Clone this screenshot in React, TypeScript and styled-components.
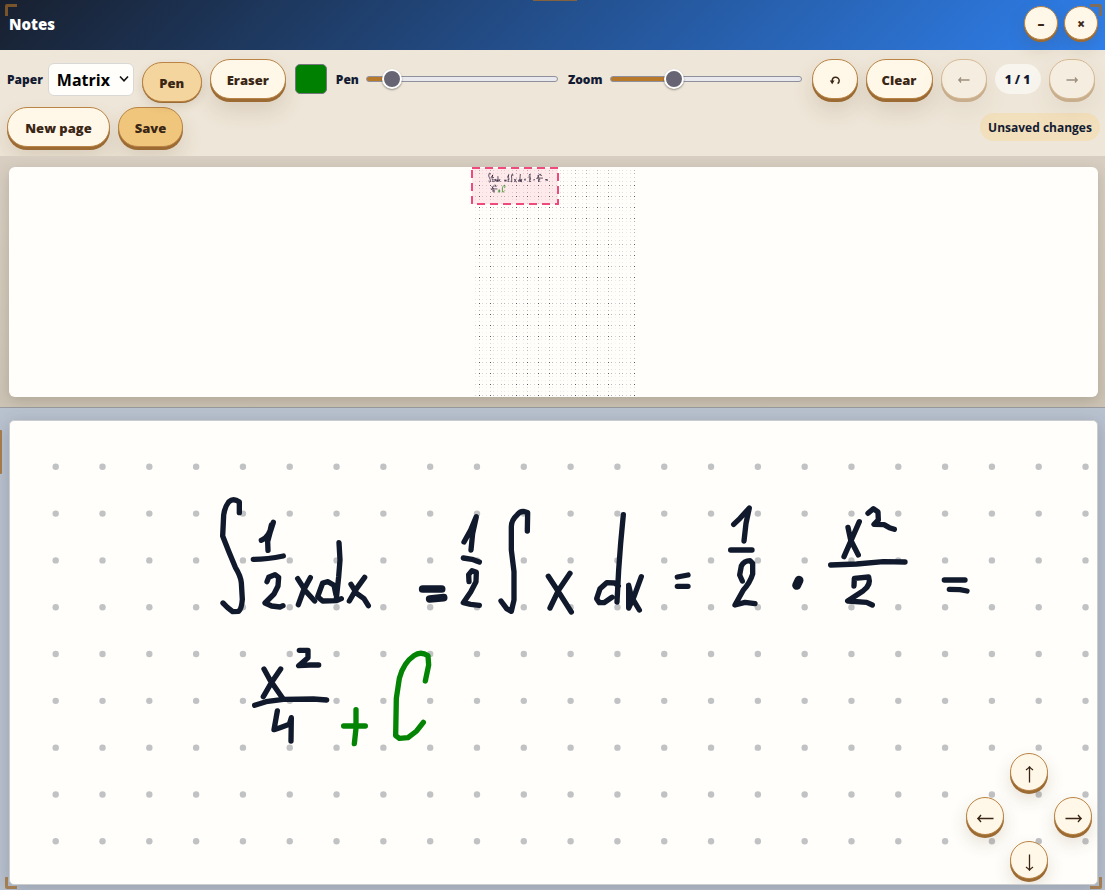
import React, { useState } from "react";
import styled, { createGlobalStyle, css } from "styled-components";

const GlobalStyle = createGlobalStyle`
  *, *::before, *::after { box-sizing: border-box; }
  html, body, #root { height: 100%; margin: 0; }
  body {
    font-family: "Open Sans", "Noto Sans", "DejaVu Sans", sans-serif;
    color: #131b33;
    overflow: hidden;
  }
  button, input, select { font-family: inherit; }
`;

const Window = styled.main`
  position: relative;
  display: flex;
  flex-direction: column;
  min-height: 100%;
  background: #eee6d8;
`;

const TitleBar = styled.header`
  display: flex;
  align-items: center;
  justify-content: space-between;
  height: 50px;
  padding: 0 7px 4px 9px;
  background: linear-gradient(135deg, #18202f, #2f80ed);
`;

const Title = styled.h1`
  margin: 1px 0 0;
  font-size: 15px;
  line-height: 20px;
  font-weight: 800;
  color: #ffffff;
`;

const WindowControls = styled.div`
  display: flex;
  gap: 6px;
`;

const Raised = styled.button`
  padding: 2px 0 0;
  border: 1px solid #b98445;
  background: #fff7e8;
  color: #3a2614;
  font-weight: 800;
  cursor: pointer;
`;

const RoundButton = styled(Raised)<{ $size: number }>`
  display: grid;
  place-items: center;
  width: ${(p) => p.$size}px;
  height: ${(p) => p.$size}px;
  border-radius: 50%;
  font-size: 14px;
  line-height: 20px;
  box-shadow: 0 2px 0 #9c6b33, 0 8px 18px rgba(90, 55, 20, 0.16);
`;

const Toolbar = styled.div`
  display: flex;
  flex-wrap: wrap;
  align-items: center;
  gap: 8px;
  padding: 9px 5px 9px 7px;
`;

const Field = styled.label`
  display: flex;
  align-items: center;
  gap: 5px;
`;

const FieldName = styled.span`
  padding-top: 2px;
  font-size: 12px;
  line-height: 18px;
  font-weight: 800;
`;

const PaperSelect = styled.div`
  position: relative;
  display: flex;
  align-items: center;

  select {
    appearance: none;
    width: 86px;
    height: 33px;
    padding: 1px 8px 0;
    border: 1px solid #d9d8d6;
    border-radius: 6px;
    background: #fffefa;
    color: #000000;
    font-size: 16px;
    font-weight: 700;
  }

  svg {
    position: absolute;
    right: 5px;
    pointer-events: none;
  }
`;

const ToolButton = styled(Raised)<{ $width: number; $tone?: "active" | "primary" }>`
  display: grid;
  place-items: center;
  min-width: ${(p) => p.$width}px;
  height: 40px;
  border-radius: 20px;
  font-size: 13px;
  line-height: 20px;
  box-shadow: 0 3px 0 #9c6b33, 0 12px 22px rgba(90, 55, 20, 0.14);

  ${(p) =>
    p.$tone === "active" &&
    css`
      background: #f5d59e;
      transform: translateY(3px);
      box-shadow: 0 1px 0 #9c6b33, 0 4px 10px rgba(90, 55, 20, 0.14);
    `}
  ${(p) =>
    p.$tone === "primary" &&
    css`
      background: #f0c67c;
    `}
  &:disabled {
    opacity: 0.45;
    cursor: default;
  }
`;

const ColorInput = styled.input`
  appearance: none;
  width: 34px;
  height: 32px;
  padding: 1px;
  border: 0;
  background: transparent;

  &::-webkit-color-swatch-wrapper { padding: 0; }
  &::-webkit-color-swatch {
    border: 1px solid #76767f;
    border-radius: 5px;
  }
`;

const Range = styled.input<{ $fill: number }>`
  appearance: none;
  width: 192px;
  height: 20px;
  margin: 0 2px;
  background: transparent;

  &::-webkit-slider-runnable-track {
    height: 6px;
    border: 1px solid #8f909d;
    border-radius: 3px;
    background:
      linear-gradient(#b9792b, #b9792b) 0 0 / ${(p) => p.$fill}% 100% no-repeat border-box,
      #e9e9ed;
  }
  &::-webkit-slider-thumb {
    appearance: none;
    width: 20px;
    height: 20px;
    margin-top: -8px;
    border: 2px solid #ffffff;
    border-radius: 50%;
    background: #676573;
    box-shadow: 0 1px 2px rgba(0, 0, 0, 0.4);
  }
`;

const PageCount = styled.output`
  min-width: 46px;
  padding: 6px 0 4px;
  border-radius: 15px;
  background: #f8f5ef;
  text-align: center;
  font-size: 12px;
  line-height: 20px;
  font-weight: 800;
`;

const Status = styled.output`
  margin-left: auto;
  min-width: 120px;
  padding: 6px 8px 4px;
  border-radius: 14px;
  background: #f2dfbb;
  text-align: center;
  white-space: nowrap;
  font-size: 12px;
  line-height: 18px;
  font-weight: 700;
`;

const OverviewPane = styled.section`
  padding: 11px 7px 10px 9px;
  border-bottom: 1px solid #9b9ca1;
  background: linear-gradient(#d8cfc2, #cdc4b5);
`;

const OverviewSheet = styled.div`
  display: flex;
  justify-content: center;
  height: 230px;
  border-radius: 6px;
  background: #fffefa;
  box-shadow: 0 4px 14px rgba(70, 60, 45, 0.22);
  overflow: hidden;
`;

const CanvasPane = styled.section`
  display: flex;
  flex: 1;
  padding: 12px 7px 5px 9px;
  background: #b9c2cf;
`;

const CanvasSheet = styled.div`
  position: relative;
  flex: 1;
  min-height: 320px;
  border: 1px solid #cbccce;
  border-radius: 5px;
  background: #fffefa;
  box-shadow: 0 4px 18px rgba(50, 55, 70, 0.25);
  overflow: hidden;

  > svg {
    position: absolute;
    inset: 0;
    width: 100%;
    height: 100%;
  }
`;

const Pad = styled.nav`
  position: absolute;
  right: 5px;
  bottom: 5px;
  display: grid;
  grid-template: repeat(3, 38px) / repeat(3, 38px);
  grid-template-areas: ". up ." "left . right" ". down .";
  gap: 6px;
`;

const PadButton = styled(RoundButton)<{ $area: string }>`
  grid-area: ${(p) => p.$area};
  padding-top: 5px;
  box-shadow: 0 3px 0 #9c6b33, 0 8px 18px rgba(90, 55, 20, 0.16);
`;

const Corner = styled.span<{ $v: "top" | "bottom"; $h: "left" | "right" }>`
  position: absolute;
  ${(p) => (p.$v === "top" ? "top: 4px" : "bottom: 1px")};
  ${(p) => (p.$h === "left" ? "left: 5px" : "right: 3px")};
  width: 12px;
  height: 12px;
  border: 0 solid rgba(160, 104, 40, 0.72);
  border-${(p) => p.$v}-width: 3px;
  border-${(p) => p.$h}-width: 3px;
  border-${(p) => p.$v}-${(p) => p.$h}-radius: 2px;
  pointer-events: none;
`;

const EdgeGrip = styled.span<{ $side: "top" | "left" }>`
  position: absolute;
  background: rgba(160, 104, 40, 0.78);
  ${(p) =>
    p.$side === "top"
      ? css`top: 0; left: calc(50% - 20px); width: 44px; height: 1px;`
      : css`left: 0; top: 430px; width: 2px; height: 44px; border-radius: 0 1px 1px 0;`}
`;

const TURN = { right: 0, down: 90, left: 180, up: 270 };

const Arrow = ({ dir, length, head }: { dir: keyof typeof TURN; length: number; head: number }) => {
  const h = length / 2;
  return (
    <svg width={length + 1} height={length + 1} viewBox={`${-h - 0.5} ${-h - 0.5} ${length + 1} ${length + 1}`} aria-hidden="true">
      <path
        transform={`rotate(${TURN[dir]})`}
        d={`M${-h} 0H${h - 0.5}M${h - head} ${-head}Q${h - head / 2} ${-head / 3} ${h - 0.3} 0Q${h - head / 2} ${head / 3} ${h - head} ${head}`}
        fill="none"
        stroke="currentColor"
        strokeWidth="1.3"
      />
    </svg>
  );
};

const UndoIcon = () => (
  <svg width="12" height="9" viewBox="0 0 12 9" aria-hidden="true">
    <path d="M3.2 5.5C3 2.6 4.4 1.2 6.4 1.2C8.6 1.2 10.2 2.8 10.2 4.8C10.2 6 9.8 6.9 8.6 7.5" fill="none" stroke="currentColor" strokeWidth="1.5" />
    <path d="M0.8 4.6L3.2 8.2L5.6 4.6Z" fill="currentColor" />
  </svg>
);

type Ink = { at: [number, number]; strokes: [string, number?, string?][] };

// Handwritten strokes, grouped by where each group starts on the sheet; drawn at a third of their units.
const INK: Ink[] = [
  {
    at: [190, 59],
    strokes: [
      ["M118 98L118 66Q100 53 86 66Q74 82 71 105L68 168L86 214L106 262Q122 288 124 308L127 358Q125 386 116 394L98 395L82 382L69 369"],
      ["M184 181Q206 174 220 127L211 155L203 185L204 211M214 135L204 180"],
      ["M160 238Q200 238 250 228"],
      ["M201 305L206 292L225 284L236 292L234 318L222 342L195 369L215 378L240 381L249 377"],
      ["M293 296L316 332L344 363M331 293L311 330L295 374"],
      ["M408 345L402 316L384 305L368 309L353 350L368 363L410 362L424 356M417 188L420 240L416 290L409 356"],
      ["M453 313L470 340L492 356L505 377M494 292L470 325L448 363"],
      ["M668 327L725 327M689 357L731 353", 23],
    ],
  },
  {
    at: [430, 69],
    strokes: [
      ["M72 156L92 120L109 80L98 130L93 180"],
      ["M70 204L96 208L118 216"],
      ["M87 275L86 254L96 242L109 247L108 275L92 306L70 338L92 343L118 346"],
      ["M262 123L263 68Q244 58 232 74Q214 90 214 110L214 180L222 245L222 330L214 364L200 356L183 333"],
      ["M325 259L352 300L394 366M390 250L356 300L330 354"],
      ["M535 288L524 279L500 278L480 296L470 326L478 338L492 338L516 322M550 74L542 160L536 240L531 336"],
      ["M566 286L574 320L598 360M604 260L582 320L566 354L566 290"],
      ["M712 261L744 255M712 289L744 289"],
    ],
  },
  {
    at: [690, 69],
    strokes: [
      ["M101 103L120 85L148 54L138 100L132 153"],
      ["M92 180L156 180"],
      ["M127 273L119 255L124 228Q132 212 150 212L158 220L158 252Q150 278 130 300L105 345L135 337L165 341"],
      ["M297 271L290 286", 27],
      ["M444 112L452 150L475 195M478 95L456 145L432 200"],
      ["M504 70L520 56L534 66L535 90L522 103L552 104L568 113L583 118"],
      ["M392 225L470 222L550 215L615 216"],
      ["M462 288L463 265L506 261Q514 285 490 302L443 333L500 337L517 345"],
      ["M733 270L795 270M748 298L780 299L801 303"],
    ],
  },
  {
    at: [220, 214],
    strokes: [
      ["M102 102L120 135L158 190M152 102L126 140L100 185"],
      ["M208 46L234 46L234 68L206 92L240 90L266 90"],
      ["M74 211L108 200L160 193L250 192L290 195"],
      ["M142 228L132 284L150 278L178 268L184 248L183 318"],
      ["M378 224L378 280L373 326M341 273L406 273", 16, "#048404"],
      ["M586 138L596 90L594 62Q572 48 552 62Q520 84 508 130L499 190L497 302L508 310L534 308L560 288L580 262", 16, "#048404"],
    ],
  },
];

const range = (n: number) => Array.from({ length: n }, (_, i) => i);

const Writing = ({ extra = 0 }: { extra?: number }) => (
  <g fill="none" stroke="#111a2c" strokeLinecap="round" strokeLinejoin="round">
    {INK.map(({ at, strokes }) => (
      <g key={at.join()} transform={`translate(${at[0]} ${at[1]}) scale(0.33333)`}>
        {strokes.map(([d, width = 16, color]) => (
          <path key={d} d={d} strokeWidth={width + extra} stroke={color} />
        ))}
      </g>
    ))}
  </g>
);

const Sheet = () => (
  <svg aria-label="Handwritten page" role="img">
    <g fill="#c1c2c4">
      {range(21).map((r) =>
        range(46).map((c) => (
          <circle key={`${r}-${c}`} cx={45.7 + c * 46.81} cy={45.8 + r * 46.81} r={3.2} />
        ))
      )}
    </g>
    <Writing />
  </svg>
);

// The dot grid falls on whole pixels once in every few dots, so those columns and rows come out darker.
const weight = (phase: number) => (phase < 4 ? 1 : phase < 7 || phase > 13 ? 0.45 : 0.26);
const gridLine = (start: number, k: number) => ({
  pos: Math.floor(start + (k * 59) / 16),
  w: weight((((k * 11) % 16) + 16) % 16),
});

const MiniMap = () => {
  const columns = range(44).map((i) => gridLine(45, i - 11));
  const rows = range(62).map((i) => gridLine(77, i - 20));
  return (
    <svg width="166" height="230" role="img" aria-label="Page overview">
      <g fill="#2b2f3c" shapeRendering="crispEdges">
        {rows.map((r) =>
          columns.map((c) => (
            <rect key={`${r.pos}-${c.pos}`} x={c.pos} y={r.pos} width="1" height="1" opacity={r.w * c.w * 0.8} />
          ))
        )}
      </g>
      <g transform="translate(1 0) scale(0.0788)">
        <Writing extra={12} />
      </g>
      <rect x="1" y="1" width="86" height="36" fill="#f43f75" fillOpacity="0.11" stroke="#ee4a7c" strokeWidth="2" strokeDasharray="8 5" />
    </svg>
  );
};

export default function App() {
  const [pen, setPen] = useState(18);
  const [zoom, setZoom] = useState(63);
  return (
    <>
      <GlobalStyle />
      <Window>
        <TitleBar>
          <Title>Notes</Title>
          <WindowControls>
            <RoundButton $size={34} aria-label="Minimize">–</RoundButton>
            <RoundButton $size={34} aria-label="Close">×</RoundButton>
          </WindowControls>
        </TitleBar>
        <Toolbar>
          <Field>
            <FieldName>Paper</FieldName>
            <PaperSelect>
              <select defaultValue="Matrix">
                <option>Matrix</option>
              </select>
              <svg width="10" height="8" viewBox="0 0 10 8" fill="none" stroke="#111" strokeWidth="1.6">
                <path d="M1 1.5L5 5.8L9 1.5" />
              </svg>
            </PaperSelect>
          </Field>
          <ToolButton $width={60} $tone="active" aria-pressed="true">Pen</ToolButton>
          <ToolButton $width={76}>Eraser</ToolButton>
          <ColorInput type="color" defaultValue="#008000" aria-label="Ink color" />
          <Field>
            <FieldName>Pen</FieldName>
            <Range type="range" max={200} value={pen} $fill={pen / 2} onChange={(e) => setPen(+e.target.value)} />
          </Field>
          <Field>
            <FieldName>Zoom</FieldName>
            <Range type="range" max={200} value={zoom} $fill={zoom / 2} onChange={(e) => setZoom(+e.target.value)} />
          </Field>
          <ToolButton $width={46} aria-label="Undo"><UndoIcon /></ToolButton>
          <ToolButton $width={67}>Clear</ToolButton>
          <ToolButton $width={46} disabled aria-label="Previous page"><Arrow dir="left" length={11} head={2.5} /></ToolButton>
          <PageCount>1 / 1</PageCount>
          <ToolButton $width={46} disabled aria-label="Next page"><Arrow dir="right" length={11} head={2.5} /></ToolButton>
          <ToolButton $width={103}>New page</ToolButton>
          <ToolButton $width={65} $tone="primary">Save</ToolButton>
          <Status>Unsaved changes</Status>
        </Toolbar>
        <OverviewPane>
          <OverviewSheet>
            <MiniMap />
          </OverviewSheet>
        </OverviewPane>
        <CanvasPane>
          <CanvasSheet>
            <Sheet />
            <Pad aria-label="Move view">
              <PadButton $area="up" $size={38} aria-label="Up"><Arrow dir="up" length={16} head={3.5} /></PadButton>
              <PadButton $area="left" $size={38} aria-label="Left"><Arrow dir="left" length={16} head={3.5} /></PadButton>
              <PadButton $area="right" $size={38} aria-label="Right"><Arrow dir="right" length={16} head={3.5} /></PadButton>
              <PadButton $area="down" $size={38} aria-label="Down"><Arrow dir="down" length={16} head={3.5} /></PadButton>
            </Pad>
          </CanvasSheet>
        </CanvasPane>
        <Corner $v="top" $h="left" />
        <Corner $v="top" $h="right" />
        <Corner $v="bottom" $h="left" />
        <Corner $v="bottom" $h="right" />
        <EdgeGrip $side="top" />
        <EdgeGrip $side="left" />
      </Window>
    </>
  );
}
